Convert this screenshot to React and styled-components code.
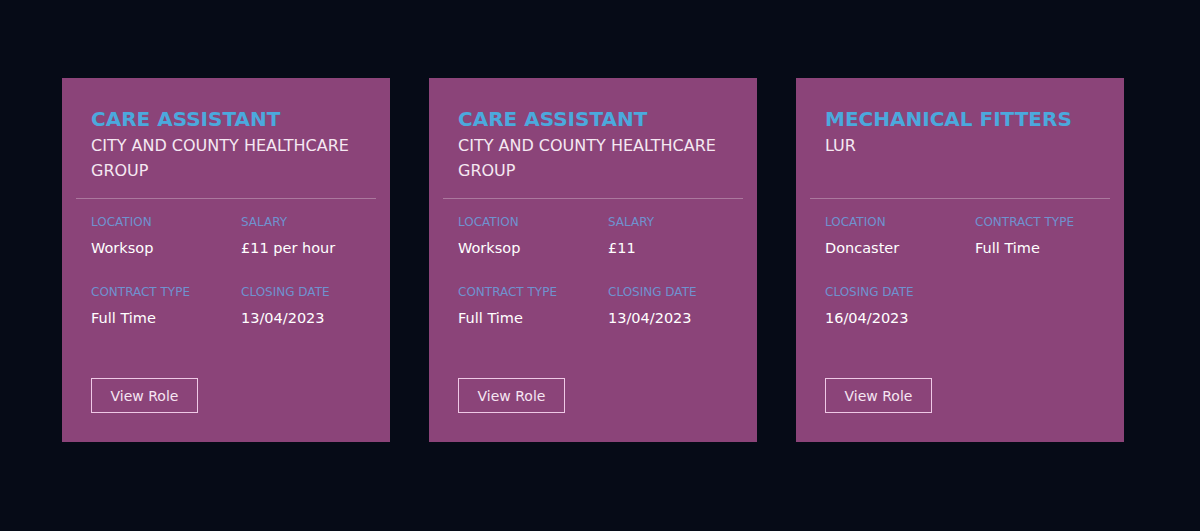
import React from "react";
import styled, { createGlobalStyle } from "styled-components";

const Global = createGlobalStyle`
  html, body { margin: 0; padding: 0; background: #060b17; }
  body { font-family: "DejaVu Sans", "Noto Sans", sans-serif; }
`;

const Page = styled.main`
  width: 1200px;
  height: 531px;
  background: #060b17;
  display: flex;
  justify-content: flex-start;
  align-items: flex-start;
  gap: 39px;
  padding: 78px 0 0 62px;
  box-sizing: border-box;
`;

const Card = styled.article`
  width: 328px;
  height: 364px;
  background: #8b4479;
  display: flex;
  flex-direction: column;
  box-sizing: border-box;
  padding: 0 14px 29px;
`;

const Header = styled.header`
  height: 121px;
  box-sizing: border-box;
  padding: 28px 15px 0;
  border-bottom: 1px solid rgba(255, 255, 255, 0.28);
`;

const Title = styled.h2`
  margin: 0;
  font-size: 20px;
  line-height: 26px;
  font-weight: 700;
  color: #4ba9dd;
  letter-spacing: 0;
  white-space: nowrap;
`;

const Company = styled.p`
  margin: 1px 0 0;
  font-size: 16px;
  line-height: 25px;
  font-weight: 400;
  color: #f5e8f2;
  text-transform: uppercase;
`;

const Details = styled.dl`
  margin: 0;
  padding-top: 14px;
  display: grid;
  grid-template-columns: 1fr 1fr;
  row-gap: 22px;
`;

const Item = styled.div`
  padding: 0 15px;
`;

const Label = styled.dt`
  font-size: 12px;
  line-height: 18px;
  color: #6f92cf;
  text-transform: uppercase;
`;

const Value = styled.dd`
  margin: 4px 0 0;
  font-size: 14.5px;
  line-height: 26px;
  color: #ffffff;
`;

const Button = styled.button`
  margin: auto 0 0 15px;
  width: 107px;
  height: 35px;
  background: transparent;
  border: 1px solid #efc9e6;
  color: #f6e6f2;
  font-family: inherit;
  font-size: 14px;
  cursor: pointer;
  padding: 0;
`;

const jobs = [
  {
    title: "CARE ASSISTANT",
    company: "City and County Healthcare Group",
    details: [
      ["Location", "Worksop"],
      ["Salary", "£11 per hour"],
      ["Contract Type", "Full Time"],
      ["Closing Date", "13/04/2023"],
    ],
  },
  {
    title: "CARE ASSISTANT",
    company: "City and County Healthcare Group",
    details: [
      ["Location", "Worksop"],
      ["Salary", "£11"],
      ["Contract Type", "Full Time"],
      ["Closing Date", "13/04/2023"],
    ],
  },
  {
    title: "MECHANICAL FITTERS",
    company: "LUR",
    details: [
      ["Location", "Doncaster"],
      ["Contract Type", "Full Time"],
      ["Closing Date", "16/04/2023"],
    ],
  },
];

export default function App() {
  return (
    <>
      <Global />
      <Page>
        {jobs.map((job, i) => (
          <Card key={i}>
            <Header>
              <Title>{job.title}</Title>
              <Company>{job.company}</Company>
            </Header>
            <Details>
              {job.details.map(([l, v]) => (
                <Item key={l}>
                  <Label>{l}</Label>
                  <Value>{v}</Value>
                </Item>
              ))}
            </Details>
            <Button>View Role</Button>
          </Card>
        ))}
      </Page>
    </>
  );
}
